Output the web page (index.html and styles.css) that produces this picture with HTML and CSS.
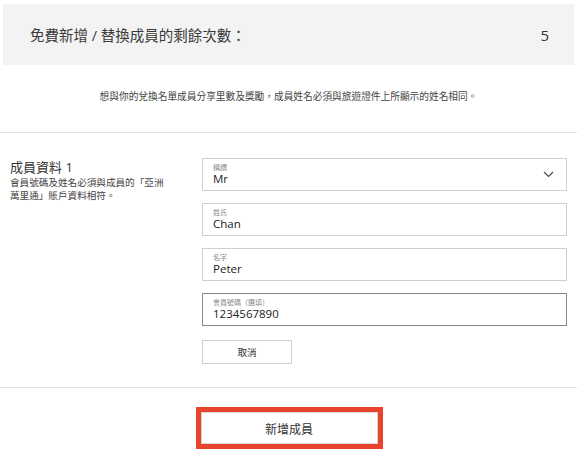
FILE: index.html
```html
<!DOCTYPE html>
<html lang="zh-Hant">
<head>
<meta charset="utf-8">
<link rel="stylesheet" href="styles.css">
</head>
<body>
<div class="summary">
  <span class="summary-title">免費新增 / 替換成員的剩餘次數：</span>
  <span class="summary-count">5</span>
</div>
<p class="intro">想與你的兌換名單成員分享里數及獎勵，成員姓名必須與旅遊證件上所顯示的姓名相同。</p>
<section class="member">
  <div class="member-info">
    <h2 class="member-title">成員資料 1</h2>
    <p class="member-note">會員號碼及姓名必須與成員的「亞洲萬里通」賬戶資料相符。</p>
  </div>
  <div class="member-fields">
    <div class="field field-select">
      <div class="field-body">
        <span class="field-label">稱謂</span>
        <span class="field-value">Mr</span>
      </div>
      <svg class="chevron" width="11" height="7" viewBox="0 0 11 7"><path d="M1 1 L5.5 5.5 L10 1" fill="none" stroke="#444" stroke-width="1.1"/></svg>
    </div>
    <div class="field">
      <div class="field-body">
        <span class="field-label">姓氏</span>
        <span class="field-value">Chan</span>
      </div>
    </div>
    <div class="field">
      <div class="field-body">
        <span class="field-label">名字</span>
        <span class="field-value">Peter</span>
      </div>
    </div>
    <div class="field field-active">
      <div class="field-body">
        <span class="field-label">會員號碼（選填）</span>
        <span class="field-value">1234567890</span>
      </div>
    </div>
    <button class="btn-cancel">取消</button>
  </div>
</section>
<div class="actions">
  <div class="highlight">
    <button class="btn-add">新增成員</button>
  </div>
</div>
</body>
</html>
```

FILE: styles.css
```css
html, body {
  margin: 0;
  padding: 0;
  background: #ffffff;
}
body {
  font-family: "Open Sans", "Noto Sans CJK TC", sans-serif;
  color: #333333;
  width: 577px;
  height: 450px;
  overflow: hidden;
}
.summary {
  margin: 4px 3px 0 3px;
  height: 61px;
  background: #f3f3f4;
  display: flex;
  align-items: center;
  justify-content: space-between;
  padding: 0 25px 0 27px;
  box-sizing: border-box;
}
.summary-title {
  font-size: 14.5px;
  color: #3a3a3a;
}
.summary-count {
  font-size: 15px;
  color: #333;
}
.intro {
  margin: 0;
  height: 68px;
  box-sizing: border-box;
  padding-top: 24px;
  text-align: center;
  font-size: 9.7px;
  color: #444;
  border-bottom: 1px solid #e2e2e2;
}
.member {
  display: flex;
  padding: 25px 10px 0 10px;
  height: 255px;
  box-sizing: border-box;
  border-bottom: 1px solid #e2e2e2;
}
.member-info {
  width: 192px;
  flex-shrink: 0;
}
.member-title {
  margin: 0;
  font-size: 13px;
  font-weight: normal;
  line-height: 18px;
  color: #333;
}
.member-note {
  margin: 0;
  font-size: 9.6px;
  line-height: 13px;
  width: 162px;
  color: #444;
}
.member-fields {
  flex: 1;
  display: flex;
  flex-direction: column;
  gap: 12px;
}
.field {
  height: 33px;
  box-sizing: border-box;
  border: 1px solid #cfcfcf;
  display: flex;
  align-items: center;
  padding: 0 10px;
}
.field-active {
  border-color: #8a8a8a;
}
.field-body {
  flex: 1;
  display: flex;
  flex-direction: column;
}
.field-label {
  font-size: 7px;
  line-height: 9px;
  color: #888;
}
.field-value {
  font-size: 11.5px;
  line-height: 14px;
  color: #222;
}
.chevron {
  margin-right: 2px;
}
.btn-cancel {
  margin-top: 2px;
  width: 90px;
  height: 24px;
  border: 1px solid #cfcfcf;
  background: #fff;
  font-family: "Noto Sans CJK TC", sans-serif;
  font-size: 9.6px;
  color: #333;
  padding: 0;
}
.actions {
  display: flex;
  justify-content: center;
  padding-top: 19px;
  padding-left: 1px;
}
.highlight {
  border: 5px solid #e8432d;
  width: 187px;
  height: 42px;
  box-sizing: border-box;
}
.btn-add {
  width: 100%;
  height: 100%;
  border: 1px solid #d6d6d6;
  background: #fff;
  font-family: "Noto Sans CJK TC", sans-serif;
  font-size: 12px;
  color: #333;
  padding: 0;
}
```
